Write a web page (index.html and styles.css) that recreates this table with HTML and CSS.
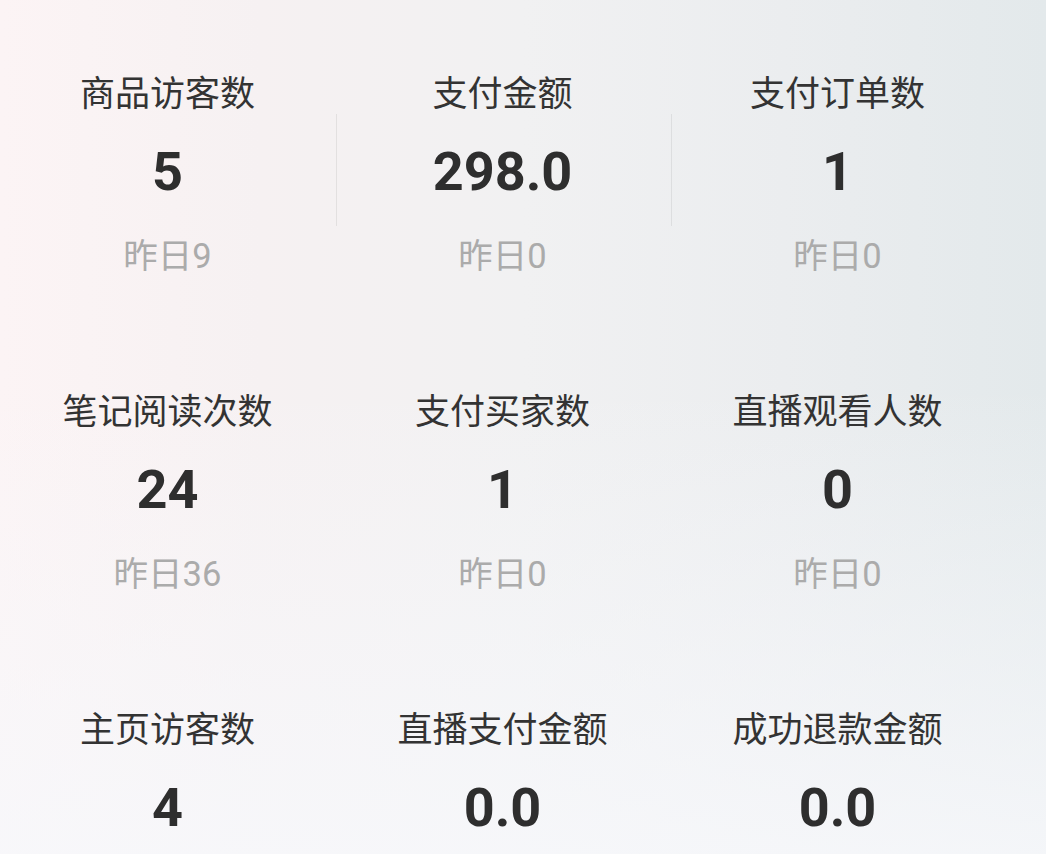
FILE: index.html
```html
<!DOCTYPE html>
<html lang="zh-CN">
<head>
<meta charset="utf-8">
<title>数据概览</title>
<link rel="stylesheet" href="styles.css">
</head>
<body>
<div class="page">
  <div class="grid">
    <div class="cell">
      <div class="label">商品访客数</div>
      <div class="value">5</div>
      <div class="prev">昨日9</div>
    </div>
    <div class="cell sep">
      <div class="label">支付金额</div>
      <div class="value">298.0</div>
      <div class="prev">昨日0</div>
    </div>
    <div class="cell sep">
      <div class="label">支付订单数</div>
      <div class="value">1</div>
      <div class="prev">昨日0</div>
    </div>
    <div class="cell">
      <div class="label">笔记阅读次数</div>
      <div class="value">24</div>
      <div class="prev">昨日36</div>
    </div>
    <div class="cell">
      <div class="label">支付买家数</div>
      <div class="value">1</div>
      <div class="prev">昨日0</div>
    </div>
    <div class="cell">
      <div class="label">直播观看人数</div>
      <div class="value">0</div>
      <div class="prev">昨日0</div>
    </div>
    <div class="cell">
      <div class="label">主页访客数</div>
      <div class="value">4</div>
    </div>
    <div class="cell">
      <div class="label">直播支付金额</div>
      <div class="value">0.0</div>
    </div>
    <div class="cell">
      <div class="label">成功退款金额</div>
      <div class="value">0.0</div>
    </div>
  </div>
</div>
</body>
</html>
```

FILE: styles.css
```css
html, body {
  margin: 0;
  padding: 0;
}

body {
  width: 1046px;
  height: 854px;
  overflow: hidden;
  font-family: Roboto, "Noto Sans CJK SC", sans-serif;
  background:
    linear-gradient(to bottom, rgba(248, 248, 250, 0) 0%, rgba(248, 248, 250, 0) 45%, rgba(247, 248, 251, 0.85) 100%),
    linear-gradient(to right, #fcf4f5 0%, #f6f1f2 25%, #f1f1f2 50%, #ebedef 75%, #e3e9eb 100%);
}

.page {
  padding-top: 69px;
}

.grid {
  width: 1005px;
  display: grid;
  grid-template-columns: repeat(3, 335px);
  row-gap: 111px;
}

.cell {
  position: relative;
  display: flex;
  flex-direction: column;
  align-items: center;
}

.sep::before {
  content: "";
  position: absolute;
  left: 1px;
  top: 45px;
  height: 112px;
  width: 1px;
  background: rgba(0, 0, 0, 0.07);
}

.label {
  font-family: "Noto Sans CJK SC", sans-serif;
  font-size: 35px;
  line-height: 44px;
  color: #333333;
}

.value {
  margin-top: 27px;
  font-family: Roboto, sans-serif;
  font-weight: 700;
  font-size: 54px;
  line-height: 64px;
  color: #2e2e2e;
}

.prev {
  margin-top: 32px;
  font-family: Roboto, "Noto Sans CJK SC", sans-serif;
  font-size: 34.5px;
  line-height: 40px;
  color: #ababab;
}
```
